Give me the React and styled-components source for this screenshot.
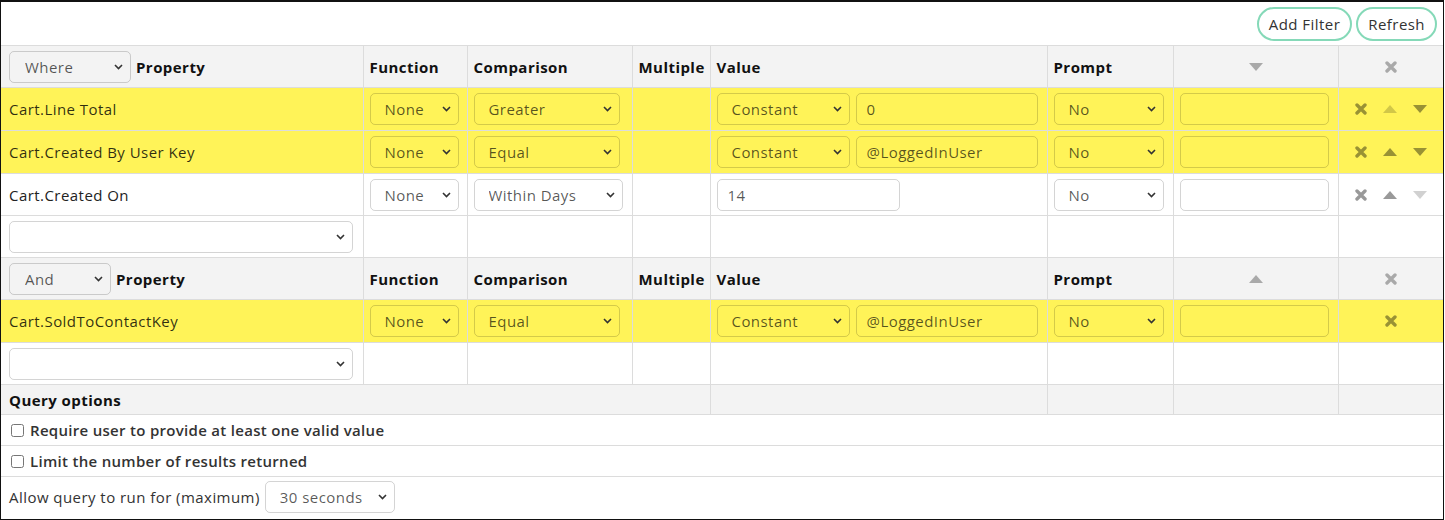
import styled, { createGlobalStyle } from "styled-components";

const GlobalStyle = createGlobalStyle`
  html, body {
    margin: 0;
    padding: 0;
    background: #fff;
  }
  body {
    font-family: "Open Sans", "Liberation Sans", sans-serif;
    letter-spacing: 0.45px;
    color: #222;
  }
`;

const Frame = styled.div`
  width: 1444px;
  height: 520px;
  box-sizing: border-box;
  border: 1px solid #111;
  border-top-width: 2px;
  background: #fff;
  display: flex;
  flex-direction: column;
  overflow: hidden;
`;

const Toolbar = styled.div`
  display: flex;
  justify-content: flex-end;
  gap: 4px;
  padding: 5px 6px 4px;
`;

const PillButton = styled.button`
  height: 34px;
  padding: 0 10px;
  border: 2px solid #85d9b8;
  border-radius: 17px;
  background: #fff;
  color: #333;
  font-family: inherit;
  letter-spacing: inherit;
  font-size: 15px;
  cursor: pointer;
`;

const Grid = styled.table`
  width: 100%;
  border-collapse: collapse;
  table-layout: fixed;
  font-size: 15px;
`;

const Row = styled.tr`
  height: ${(p) => p.$h || 42}px;
  background: ${(p) => (p.$tone === "hit" ? "#fff358" : p.$tone === "head" ? "#f3f3f3" : "#fff")};
  color: ${(p) => (p.$tone === "hit" ? "rgba(0,0,0,0.82)" : "#222")};
  &:last-child td { border-bottom: none; }
`;

const Cell = styled.td`
  border: 1px solid #dcdcdc;
  padding: 0 6px;
  vertical-align: middle;
  white-space: nowrap;
  text-align: ${(p) => p.$align || "left"};
  &:first-child { border-left: none; padding-left: 8px; }
  &:last-child { border-right: none; }
`;

const HeadCell = styled(Cell).attrs({ as: "th" })`
  font-weight: 700;
  color: #111;
`;

const Lead = styled.div`
  display: flex;
  align-items: center;
  gap: 5px;
`;

const SelectWrap = styled.div`
  position: relative;
  display: inline-block;
  width: ${(p) => p.$w}px;
  vertical-align: middle;
`;

const Select = styled.select`
  appearance: none;
  width: 100%;
  height: 32px;
  box-sizing: border-box;
  border: 1px solid rgba(0, 0, 0, 0.17);
  border-radius: 5px;
  background: transparent;
  padding: 0 24px 0 ${(p) => p.$pad || 14}px;
  font-family: inherit;
  letter-spacing: inherit;
  font-size: 15px;
  color: rgba(0, 0, 0, 0.66);
`;

const Chevron = styled.svg`
  position: absolute;
  right: 8px;
  top: 13px;
  width: 9px;
  height: 6px;
  pointer-events: none;
`;

const Field = styled.input`
  width: ${(p) => p.$w}px;
  height: 32px;
  box-sizing: border-box;
  border: 1px solid rgba(0, 0, 0, 0.17);
  border-radius: 5px;
  background: transparent;
  padding: 0 10px;
  font-family: inherit;
  letter-spacing: inherit;
  font-size: 15px;
  color: rgba(0, 0, 0, 0.66);
  vertical-align: middle;
`;

const Pair = styled.div`
  display: flex;
  gap: 6px;
`;

const Tools = styled.div`
  display: flex;
  justify-content: center;
  align-items: center;
  gap: 16px;
`;

const Glyph = styled.svg`
  display: block;
  color: ${(p) => (p.$dim ? "rgba(0,0,0,0.18)" : p.$soft ? "rgba(0,0,0,0.3)" : "rgba(0,0,0,0.4)")};
`;

const OptionLabel = styled.label`
  display: flex;
  align-items: center;
  gap: 6px;
  font-weight: 600;
  letter-spacing: 0.3px;
  color: #333;
`;

const Check = styled.input`
  margin: 0 0 0 2px;
  width: 13px;
  height: 13px;
`;

const RunFor = styled.div`
  display: flex;
  align-items: center;
  gap: 5px;
  color: #333;
`;

const Drop = ({ value, w, pad }) => (
  <SelectWrap $w={w}>
    <Select $pad={pad} defaultValue={value}>
      <option>{value}</option>
    </Select>
    <Chevron viewBox="0 0 9 6">
      <path d="M1 1l3.5 3.5L8 1" fill="none" stroke="#333" strokeWidth="1.6" />
    </Chevron>
  </SelectWrap>
);

const Cross = ({ soft }) => (
  <Glyph $soft={soft} width="12" height="12" viewBox="0 0 12 12">
    <path d="M2 2l8 8M10 2l-8 8" stroke="currentColor" strokeWidth="3.4" strokeLinecap="round" />
  </Glyph>
);

const Up = ({ dim, soft }) => (
  <Glyph $dim={dim} $soft={soft} width="14" height="8" viewBox="0 0 14 8">
    <path d="M7 0l7 8H0z" fill="currentColor" />
  </Glyph>
);

const Down = ({ dim, soft }) => (
  <Glyph $dim={dim} $soft={soft} width="14" height="8" viewBox="0 0 14 8">
    <path d="M0 0h14L7 8z" fill="currentColor" />
  </Glyph>
);

const HeaderRow = ({ join, joinW, sort }) => (
  <Row $tone="head" $h={42}>
    <HeadCell>
      <Lead>
        <Drop value={join} w={joinW} pad={15} />
        <span>Property</span>
      </Lead>
    </HeadCell>
    <HeadCell>Function</HeadCell>
    <HeadCell>Comparison</HeadCell>
    <HeadCell>Multiple</HeadCell>
    <HeadCell>Value</HeadCell>
    <HeadCell>Prompt</HeadCell>
    <HeadCell $align="center">
      <Tools>{sort === "up" ? <Up soft /> : <Down soft />}</Tools>
    </HeadCell>
    <HeadCell $align="center">
      <Tools>
        <Cross soft />
      </Tools>
    </HeadCell>
  </Row>
);

const FilterRow = ({ f }) => (
  <Row $tone={f.hit ? "hit" : undefined} $h={f.h || 42}>
    <Cell>{f.property}</Cell>
    <Cell>
      <Drop value="None" w={89} />
    </Cell>
    <Cell>
      <Drop value={f.comparison} w={f.compW || 146} />
    </Cell>
    <Cell />
    <Cell>
      {f.source ? (
        <Pair>
          <Drop value={f.source} w={133} />
          <Field $w={182} defaultValue={f.value} />
        </Pair>
      ) : (
        <Field $w={183} defaultValue={f.value} />
      )}
    </Cell>
    <Cell>
      <Drop value="No" w={110} />
    </Cell>
    <Cell>
      <Field $w={149} defaultValue="" />
    </Cell>
    <Cell>
      <Tools>
        <Cross />
        {f.moves && <Up dim={f.moves[0] === 0} />}
        {f.moves && <Down dim={f.moves[1] === 0} />}
      </Tools>
    </Cell>
  </Row>
);

const PickRow = () => (
  <Row $h={42}>
    <Cell>
      <Drop value="" w={344} />
    </Cell>
    <Cell />
    <Cell />
    <Cell />
    <Cell />
    <Cell />
    <Cell />
    <Cell />
  </Row>
);

const firstGroup = [
  { property: "Cart.Line Total", comparison: "Greater", source: "Constant", value: "0", hit: true, moves: [0, 1], h: 43 },
  { property: "Cart.Created By User Key", comparison: "Equal", source: "Constant", value: "@LoggedInUser", hit: true, moves: [1, 1], h: 43 },
  { property: "Cart.Created On", comparison: "Within Days", compW: 149, value: "14", moves: [1, 0] },
];

const secondGroup = [
  { property: "Cart.SoldToContactKey", comparison: "Equal", source: "Constant", value: "@LoggedInUser", hit: true, h: 43 },
];

export default function App() {
  return (
    <>
      <GlobalStyle />
      <Frame>
        <Toolbar>
          <PillButton>Add Filter</PillButton>
          <PillButton>Refresh</PillButton>
        </Toolbar>
        <Grid>
          <colgroup>
            <col style={{ width: 362 }} />
            <col style={{ width: 104 }} />
            <col style={{ width: 165 }} />
            <col style={{ width: 78 }} />
            <col style={{ width: 337 }} />
            <col style={{ width: 126 }} />
            <col style={{ width: 165 }} />
            <col />
          </colgroup>
          <tbody>
            <HeaderRow join="Where" joinW={122} sort="down" />
            {firstGroup.map((f) => (
              <FilterRow key={f.property} f={f} />
            ))}
            <PickRow />
            <HeaderRow join="And" joinW={102} sort="up" />
            {secondGroup.map((f) => (
              <FilterRow key={f.property} f={f} />
            ))}
            <PickRow />
            <Row $tone="head" $h={30}>
              <HeadCell colSpan={4}>Query options</HeadCell>
              <HeadCell />
              <HeadCell />
              <HeadCell />
              <HeadCell />
            </Row>
            <Row $h={31}>
              <Cell colSpan={8}>
                <OptionLabel>
                  <Check type="checkbox" />
                  Require user to provide at least one valid value
                </OptionLabel>
              </Cell>
            </Row>
            <Row $h={31}>
              <Cell colSpan={8}>
                <OptionLabel>
                  <Check type="checkbox" />
                  Limit the number of results returned
                </OptionLabel>
              </Cell>
            </Row>
            <Row $h={41}>
              <Cell colSpan={8}>
                <RunFor>
                  Allow query to run for (maximum)
                  <Drop value="30 seconds" w={130} />
                </RunFor>
              </Cell>
            </Row>
          </tbody>
        </Grid>
      </Frame>
    </>
  );
}
